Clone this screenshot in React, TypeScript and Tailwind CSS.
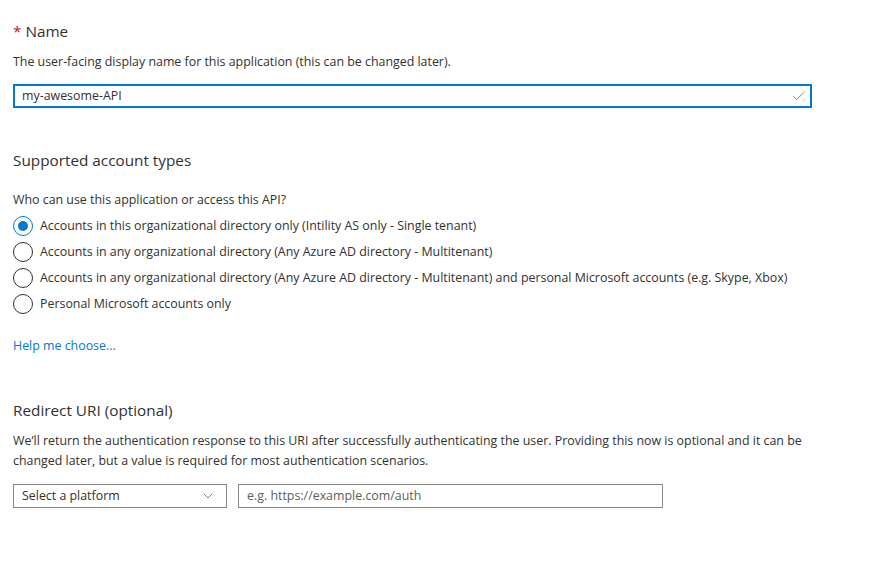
import { Check, ChevronDown } from "lucide-react";

const font = { fontFamily: "'Open Sans', 'Noto Sans', sans-serif" };

const accountTypes = [
  "Accounts in this organizational directory only (Intility AS only - Single tenant)",
  "Accounts in any organizational directory (Any Azure AD directory - Multitenant)",
  "Accounts in any organizational directory (Any Azure AD directory - Multitenant) and personal Microsoft accounts (e.g. Skype, Xbox)",
  "Personal Microsoft accounts only",
];

function Radio({ checked, label }: { checked?: boolean; label: string }) {
  return (
    <label className="flex items-center h-[26px]">
      <span
        className={
          "w-[20px] h-[20px] rounded-full border flex items-center justify-center " +
          (checked ? "border-[#0078d4]" : "border-[#323130]")
        }
      >
        {checked && <span className="w-[10px] h-[10px] rounded-full bg-[#0078d4]" />}
      </span>
      <span className="ml-[7px]">{label}</span>
    </label>
  );
}

export default function App() {
  return (
    <div className="min-h-screen bg-white text-[#323130] text-[12.4px] px-[13px] pt-[20px]" style={font}>
      <h2 className="text-[15.3px] leading-[22px] flex items-center">
        <span className="text-[#a4262c] mr-[4px]">*</span>Name
      </h2>
      <p className="mt-[11px] leading-[18px]">
        The user-facing display name for this application (this can be changed later).
      </p>
      <div className="mt-[13px] w-[799px] h-[24px] border-2 border-[#0078d4] flex items-center pl-[7px] pr-[4px]">
        <span className="flex-1">my-awesome-API</span>
        <Check size={15} strokeWidth={1.2} className="text-[#605e5c]" />
      </div>

      <h2 className="mt-[41px] text-[15.3px] leading-[22px]">Supported account types</h2>
      <p className="mt-[20px] leading-[18px]">Who can use this application or access this API?</p>
      <div className="mt-[4px] flex flex-col">
        {accountTypes.map((t, i) => (
          <Radio key={t} label={t} checked={i === 0} />
        ))}
      </div>

      <a className="block mt-[20px] text-[#0078d4] leading-[18px]">Help me choose...</a>

      <h2 className="mt-[44px] text-[15.3px] leading-[22px]">Redirect URI (optional)</h2>
      <p className="mt-[10px] leading-[20px] max-w-[800px]">
        We’ll return the authentication response to this URI after successfully authenticating the user. Providing this now
        is optional and it can be changed later, but a value is required for most authentication scenarios.
      </p>
      <div className="mt-[13px] flex gap-[11px]">
        <div className="w-[214px] h-[24px] border border-[#8a8886] flex items-center pl-[8px] pr-[10px]">
          <span className="flex-1">Select a platform</span>
          <ChevronDown size={16} strokeWidth={1.2} className="text-[#605e5c]" />
        </div>
        <div className="w-[425px] h-[24px] border border-[#8a8886] flex items-center pl-[8px] text-[#605e5c]">
          e.g. https://example.com/auth
        </div>
      </div>
    </div>
  );
}
